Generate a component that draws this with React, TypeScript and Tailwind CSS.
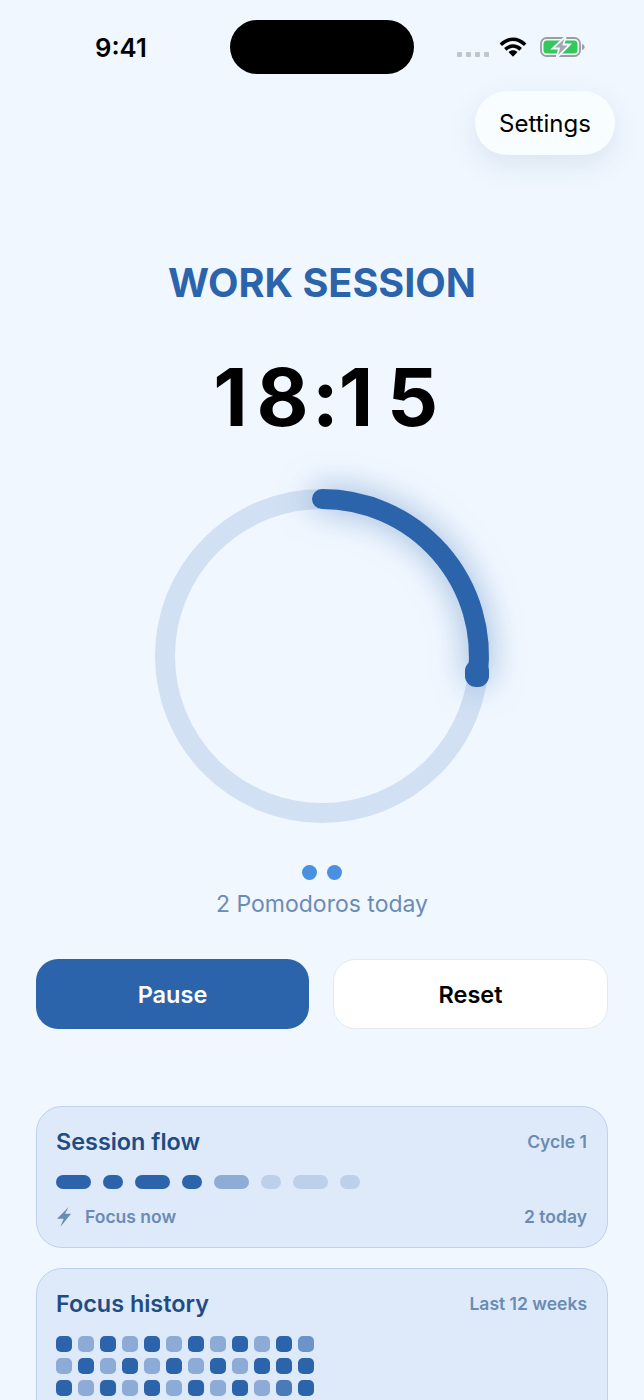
import React from "react";

const FLOW = [
  { w: "w-[35px]", c: "bg-[#2c64ab]" },
  { w: "w-[20px]", c: "bg-[#2c64ab]" },
  { w: "w-[35px]", c: "bg-[#2c64ab]" },
  { w: "w-[20px]", c: "bg-[#2c64ab]" },
  { w: "w-[35px]", c: "bg-[#8dacd6]" },
  { w: "w-[20px]", c: "bg-[#bcd0ea]" },
  { w: "w-[35px]", c: "bg-[#bcd0ea]" },
  { w: "w-[20px]", c: "bg-[#bcd0ea]" },
];

const D = "bg-[#2c64ab]";
const L = "bg-[#8cabd6]";
const M = "bg-[#6b94c8]";
const S = "bg-[#4a7ab8]";

const HISTORY = [
  D, L, D, L, D, L, D, L, D, L, D, M,
  L, D, L, D, L, D, L, D, L, D, D, D,
  D, L, D, L, D, L, D, L, D, L, S, D,
  L, D, L, D, L, D, L, D, L, D, L, D,
];

function StatusIcons() {
  return (
    <div className="flex items-center">
      <div className="mt-[15px] flex gap-[4px]">
        {[0, 1, 2, 3].map((i) => (
          <span key={i} className="h-[5px] w-[5px] rounded-[1px] bg-[#c2c6cc]" />
        ))}
      </div>
      <svg width="28" height="20" viewBox="0 0 28 20" className="ml-[10px]" fill="none">
        <path d="M1.800 7.800C9.500 .6 18.500 .6 26.200 7.800" stroke="#000" strokeWidth="3.600" />
        <path d="M6.300 12.300C11 8 17 8 21.700 12.300" stroke="#000" strokeWidth="3.600" />
        <path d="M9.500 15C12.200 12.500 15.800 12.500 18.500 15L14 19.800Z" fill="#000" />
      </svg>
      <svg width="46" height="22" viewBox="0 0 46 22" className="ml-[13px]" fill="none">
        <rect x="1" y="2" width="39" height="18" rx="5.500" stroke="#9a9ea3" strokeWidth="1.800" />
        <rect x="3.500" y="4.500" width="34" height="13" rx="3.500" fill="#34c759" />
        <path d="M42 8v6c1.600-.5 2.600-1.600 2.600-3S43.600 8.500 42 8Z" fill="#9a9ea3" />
        <path d="M26 0 12.500 12.500h6.500L16.500 22 30 8.500h-6.500Z" fill="#a4a8ad" stroke="#f0f7ff" strokeWidth="1.800" />
      </svg>
    </div>
  );
}

function Ring() {
  return (
    <div className="relative mt-[29px] flex justify-center">
      <svg width="360" height="360" viewBox="0 0 360 360" fill="none" className="overflow-visible">
        <circle cx="180" cy="180" r="157" stroke="#d1e0f3" strokeWidth="20" />
        <path
          d="M180 23A157 157 0 0 1 335.800 199"
          stroke="#2c64ab"
          strokeWidth="20"
          strokeLinecap="round"
          className="drop-shadow-[0_0_16px_rgba(44,100,171,0.5)]"
        />
        <rect x="323" y="184" width="24" height="27" rx="11" fill="#2c64ab" />
      </svg>
    </div>
  );
}

function FlowCard() {
  return (
    <div className="h-[142px] rounded-[26px] border border-[#bcd2ee] bg-[#deeaf9] pt-[18px] pr-[20px] pl-[19px]">
      <div className="flex items-center justify-between">
        <span className="text-[23.400px] leading-[34px] font-semibold text-[#1f4c85]">Session flow</span>
        <span className="text-[17.500px] font-semibold text-[#6a8cb4]">Cycle 1</span>
      </div>
      <div className="mt-[16px] flex gap-[12px]">
        {FLOW.map((seg, i) => (
          <span key={i} className={`h-[14px] rounded-[7px] ${seg.w} ${seg.c}`} />
        ))}
      </div>
      <div className="mt-[15px] flex items-center justify-between">
        <div className="flex items-center">
          <svg width="15" height="20" viewBox="0 0 15 20" className="ml-[1px]">
            <path d="M11.700 0 0 11.700H6.700L3.300 20 14 6.700H8Z" fill="#6a8cb4" />
          </svg>
          <span className="ml-[13px] text-[17.500px] font-semibold text-[#6a8cb4]">Focus now</span>
        </div>
        <span className="text-[17.500px] font-semibold text-[#6a8cb4]">2 today</span>
      </div>
    </div>
  );
}

function HistoryCard() {
  return (
    <div className="mt-[20px] h-[170px] rounded-[26px] border border-[#bcd2ee] bg-[#deeaf9] pt-[18px] pr-[20px] pl-[19px]">
      <div className="flex items-center justify-between">
        <span className="text-[23.400px] leading-[34px] font-semibold text-[#1f4c85]">Focus history</span>
        <span className="text-[17.500px] font-semibold text-[#6a8cb4]">Last 12 weeks</span>
      </div>
      <div className="mt-[15px] grid w-fit grid-cols-[repeat(12,16px)] gap-[6px]">
        {HISTORY.map((c, i) => (
          <span key={i} className={`h-[16px] w-[16px] rounded-[5px] ${c}`} />
        ))}
      </div>
    </div>
  );
}

export default function App() {
  return (
    <div className="h-[1400px] w-[644px] overflow-hidden bg-[#f0f7ff] font-['Inter',sans-serif] text-black">
      {/* status bar */}
      <div className="flex h-[54px] translate-y-[20px] items-center">
        <span className="ml-[95px] w-[135px] translate-y-[1px] text-[25.700px] font-semibold">9:41</span>
        <div className="h-[54px] w-[184px] rounded-[27px] bg-black" />
        <div className="ml-[43px]">
          <StatusIcons />
        </div>
      </div>

      <div className="mt-[37px] flex justify-end pr-[29px]">
        <div className="flex h-[64px] w-[140px] items-center justify-center rounded-[32px] bg-[#f8fdff] pt-[2px] text-[24px] shadow-[0_10px_30px_rgba(44,70,110,0.1)]">
          Settings
        </div>
      </div>

      <div className="mt-[104px] text-center text-[39.600px] leading-[48px] font-bold text-[#2c64ab]">WORK SESSION</div>

      <div className="mt-[40px] ml-[10px] flex justify-center text-center text-[80px] leading-[100px] font-bold">
        <span className="w-[45px]">1</span>
        <span className="w-[59px]">8</span>
        <span className="w-[21px]">:</span>
        <span className="w-[46px]">1</span>
        <span className="w-[67px]">5</span>
      </div>

      <Ring />

      <div className="mt-[29px] flex justify-center gap-[10px]">
        <span className="h-[15px] w-[15px] rounded-full bg-[#4a90e2]" />
        <span className="h-[15px] w-[15px] rounded-full bg-[#4a90e2]" />
      </div>
      <div className="mt-[8px] text-center text-[23px] leading-[32px] text-[#6a8cb4]">2 Pomodoros today</div>

      <div className="mt-[39px] flex gap-[24px] px-[36px]">
        <button className="h-[70px] flex-1 rounded-[22px] bg-[#2c64ab] pt-[2px] text-[23.500px] font-semibold text-white">Pause</button>
        <button className="h-[70px] flex-1 rounded-[22px] border border-[#e4e9f0] bg-white pt-[2px] text-[23.500px] font-semibold text-black">Reset</button>
      </div>

      <div className="mt-[77px] px-[36px]">
        <FlowCard />
        <HistoryCard />
      </div>
    </div>
  );
}
